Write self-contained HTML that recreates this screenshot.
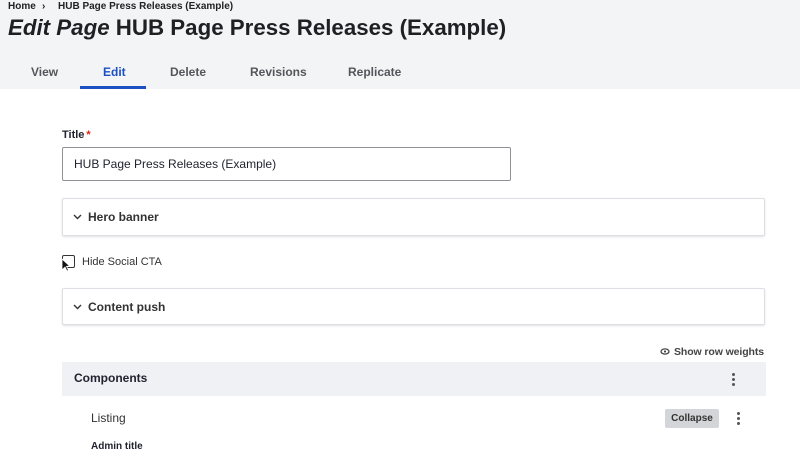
<!DOCTYPE html>
<html><head><style>
*{box-sizing:border-box;margin:0;padding:0}
body{width:800px;height:456px;overflow:hidden;background:#fff;font-family:"Liberation Sans",Arial,sans-serif;color:#222330;position:relative}
.hdr{position:absolute;left:0;top:0;width:800px;height:89px;background:#f3f4f6}
.a{position:absolute;white-space:nowrap}
.bc{top:1px;font-size:10px;font-weight:bold;color:#222}
h1{position:absolute;left:8px;top:15px;font-size:22.3px;font-weight:bold;color:#1f1f24;white-space:nowrap}
.tab{top:65px;font-size:12px;font-weight:bold;color:#55565b}
.box{position:absolute;left:62px;width:703px;border:1px solid #dedfe4;border-radius:2px;box-shadow:0 1px 2px rgba(0,0,0,.12);background:#fff}
.sum{position:absolute;left:10px;font-size:12px;font-weight:bold;color:#333}
.sum svg{vertical-align:middle;margin-right:6px;margin-top:-2px}
.dots{position:absolute;width:3px}
.dots i{display:block;width:3px;height:3px;border-radius:50%;background:#555;margin-bottom:2px}
</style></head><body>
<div class="hdr"></div>
<div class="a bc" style="left:8px">Home</div>
<div class="a bc" style="left:42px">›</div>
<div class="a bc" style="left:58px">HUB Page Press Releases (Example)</div>
<h1><i>Edit Page</i> HUB Page Press Releases (Example)</h1>
<div class="a tab" style="left:31px">View</div>
<div class="a tab" style="left:103px;color:#1b4fc4">Edit</div>
<div class="a tab" style="left:170px">Delete</div>
<div class="a tab" style="left:250px">Revisions</div>
<div class="a tab" style="left:348px">Replicate</div>
<div class="a" style="left:80px;top:86px;width:66px;height:3px;background:#1b4fc4"></div>

<div class="a" style="left:62px;top:129px;font-size:11px;font-weight:bold">Title<span style="color:#d21;margin-left:2px">*</span></div>
<div class="a" style="left:62px;top:147px;width:449px;height:34px;border:1px solid #919297;border-radius:2px;font-size:12px;padding:9px 0 0 11px">HUB Page Press Releases (Example)</div>

<div class="box" style="top:198px;height:38px"><div class="sum" style="top:11px"><svg width="9" height="6" viewBox="0 0 9 6"><path d="M1 1l3.5 3.5L8 1" fill="none" stroke="#333" stroke-width="1.4"/></svg>Hero banner</div></div>

<div class="a" style="left:62px;top:255px;width:13px;height:13px;border:1.5px solid #333;border-radius:2px"></div>
<svg class="a" style="left:61px;top:258px" width="10" height="14" viewBox="0 0 10 14"><path d="M1 1v11l3-3 2 4 1.5-.7-2-4H9z" fill="#111" stroke="#fff" stroke-width=".8"/></svg>
<div class="a" style="left:82px;top:256px;font-size:11px;color:#333">Hide Social CTA</div>

<div class="box" style="top:288px;height:37px"><div class="sum" style="top:11px"><svg width="9" height="6" viewBox="0 0 9 6"><path d="M1 1l3.5 3.5L8 1" fill="none" stroke="#333" stroke-width="1.4"/></svg>Content push</div></div>

<svg class="a" style="left:660px;top:348px" width="10" height="7" viewBox="0 0 10 7"><ellipse cx="5" cy="3.5" rx="4" ry="2.6" fill="none" stroke="#444" stroke-width="1.3"/><circle cx="5" cy="3.5" r="1.1" fill="#444"/></svg>
<div class="a" style="left:674px;top:346px;font-size:10.5px;font-weight:bold;color:#444;letter-spacing:-.1px">Show row weights</div>
<div class="a" style="left:62px;top:362px;width:704px;height:34px;background:#f0f1f4"></div>
<div class="a" style="left:74px;top:371px;font-size:12px;font-weight:bold">Components</div>
<div class="dots" style="left:732px;top:373px"><i></i><i></i><i></i></div>
<div class="a" style="left:91px;top:411px;font-size:12px;color:#333">Listing</div>
<div class="a" style="left:665px;top:409px;width:54px;height:19px;background:#d4d5d8;border-radius:2px;font-size:10px;font-weight:bold;text-align:center;line-height:19px;color:#333">Collapse</div>
<div class="dots" style="left:737px;top:412px"><i></i><i></i><i></i></div>
<div class="a" style="left:91px;top:441px;font-size:10px;font-weight:bold">Admin title</div>
</body></html>
